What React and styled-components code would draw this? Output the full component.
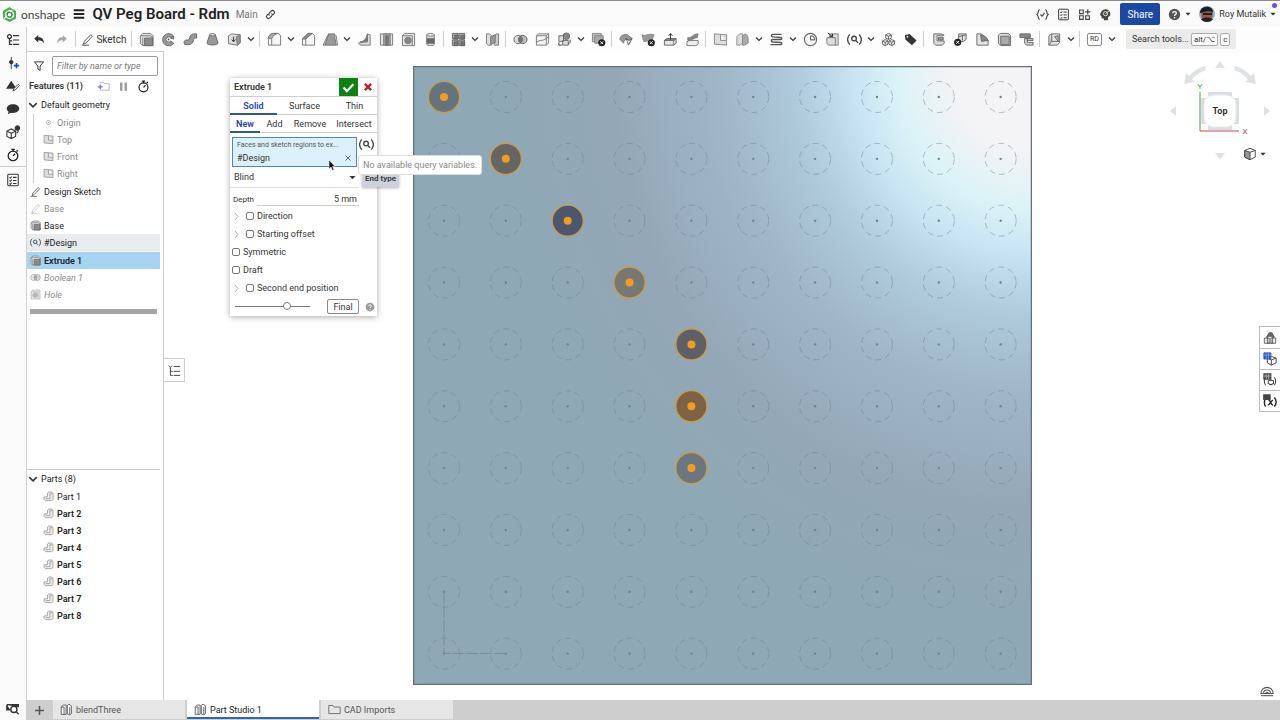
import React, { useState } from "react";
import styled, { createGlobalStyle } from "styled-components";

const GlobalStyle = createGlobalStyle`
  * {
    box-sizing: border-box;
  }

  body {
    margin: 0;
    font-family: Roboto, "Liberation Sans", sans-serif;
    font-size: 9px;
    color: #333;
    background: #fff;
  }

  button, input, select {
    font: inherit;
    color: inherit;
  }
`;

/* ---------- icons ---------- */

const glyphs = {
  tree: (
    <g fill="none" stroke="#333" strokeWidth="1.4">
      <circle cx="4" cy="4" r="2.2" />
      <path d="M4 6v7h3M8 3h7M8 8h7M8 13h7M4 9h3" />
    </g>
  ),
  insert: (
    <g stroke="#333" fill="#333">
      <path d="M6 1v14" />
      <circle cx="6" cy="7" r="2" />
      <path d="M12 8v6M9 11h6" stroke="#1c4aa8" strokeWidth="1.8" />
    </g>
  ),
  appearance: (
    <g>
      <path d="m6 2 6 9H0z" fill="#333" />
      <path d="m14 6 1.500 1.500-5 5-2.500 1 1-2.500z" fill="#fff" stroke="#333" />
    </g>
  ),
  comment: (
    <path
      d="M8 2.500c4.200 0 7.200 2.200 7.200 5s-3 5-7.200 5c-1 0-1.700-.1-2.400-.3L2 14l1-3C1.600 10 .8 8.900.8 7.500c0-2.800 3-5 7.200-5z"
      fill="#333"
    />
  ),
  cubeInfo: (
    <g fill="none" stroke="#333" strokeWidth="1.200">
      <path d="m1 7 5-2.500L11 7v6l-5 2.500L1 13zM1 7l5 2.500L11 7M6 9.500v6" />
      <circle cx="13" cy="3.500" r="2.500" fill="#333" />
      <path d="M12 9c1.500 0 2-1.500 2-3" />
    </g>
  ),
  stopwatch: (
    <g fill="none" stroke="#222" strokeWidth="1.500">
      <circle cx="8" cy="9" r="5.500" />
      <path d="M6 1.500h4M8 2v2M12 4l1.500-1.500M8 9l2.500-2.500" />
    </g>
  ),
  checklist: (
    <g fill="none" stroke="#333" strokeWidth="1.200">
      <rect x="2" y="1.500" width="12" height="13" rx="1" />
      <path d="m4 5 1 1 1.500-2M8 5h4M4 8.500l1 1L6.500 7.500M8 8.500h4M4 12l1 1 1.500-2M8 12h4" />
    </g>
  ),
  undo: (
    <path
      d="M7 2.500v3c4.500 0 7.500 2 7.500 8.500C13 10.500 11 9.500 7 9.500v3L1.500 7.500z"
      fill="#333"
    />
  ),
  redo: (
    <path
      d="M9 2.500v3C4.500 5.500 1.500 7.500 1.500 14 3 10.500 5 9.500 9 9.500v3l5.500-5z"
      fill="#aaa"
    />
  ),
  pencil: (
    <g fill="none" stroke="#555" strokeWidth="1.200">
      <path d="M12 2l2 2-8 8.500L3 14l1-3.500zM1 15h9" />
    </g>
  ),
  pencilLight: (
    <g fill="none" stroke="#999" strokeWidth="1.200">
      <path d="M12 2l2 2-8 8.500L3 14l1-3.500zM1 15h9" />
    </g>
  ),
  extrude: (
    <g stroke="#777">
      <path d="M1.500 4 4 1.500h8.500L15 4v10.500H4L1.500 12z" fill="#e2e2e2" />
      <path d="M1.500 4H12l3 2M4 14.500V6" fill="none" />
      <path d="M6 6.500h8.500v8H6z" fill="#8a8a8a" stroke="#666" />
    </g>
  ),
  revolve: (
    <g>
      <path
        d="M13.500 4.500A6.500 6.500 0 1 0 13.500 12L10.500 9.500a2.800 2.800 0 1 1 0-3z"
        fill="#999"
        stroke="#666"
      />
      <path d="m10.500 6.500 3-2v3z" fill="#ddd" stroke="#555" />
      <circle cx="8" cy="8" r="1" fill="#444" />
    </g>
  ),
  sweep: (
    <path
      d="M1 11c0-2 2-2.500 4-2.500S7 7 7.500 5 9.500 2 12 2h2.500v4.500H13c-1.500 0-1.500 1-2 3s-2.500 4-5.500 4H2z"
      fill="#999"
      stroke="#666"
    />
  ),
  loft: (
    <g stroke="#666">
      <path d="M5 3h6l3 9c-2 2.500-10 2.500-12 0z" fill="#999" />
      <ellipse cx="8" cy="3" rx="3" ry="1.300" fill="#eee" />
    </g>
  ),
  thicken: (
    <g stroke="#777">
      <path d="M1.500 4 5 2l9 1v8.500L11 14l-9.500-1.500z" fill="#ddd" />
      <path d="m10 5 4-2v8.500L11 14z" fill="#999" />
      <path d="M7 5v5M5 8l2 2.500L9 8" stroke="#333" fill="none" />
    </g>
  ),
  fillet: (
    <g stroke="#777">
      <path d="M1.500 14V7c0-3 2-5.500 5.500-5.500h5L14.500 4v10z" fill="#f6f6f6" />
      <path d="M1.500 7c0-3 2-5.500 5.500-5.500h5C9 2 6 4 5 7z" fill="#aaa" />
      <path d="M5 14V7" fill="none" />
    </g>
  ),
  chamfer: (
    <g stroke="#777">
      <path d="M1.500 14V7.500l6-6H12L14.500 4v10z" fill="#f6f6f6" />
      <path d="m1.500 7.500 6-6H12l-7 6z" fill="#888" />
      <path d="M5 14V7.500" fill="none" />
    </g>
  ),
  draft: (
    <g stroke="#777">
      <path d="M6 2h6l2 12H2z" fill="#999" />
      <path d="M6 2 2 14H0z" fill="#ddd" />
      <path d="m12 2 2 12h1.500L14 4z" fill="#eee" />
    </g>
  ),
  rib: (
    <g stroke="#777">
      <path d="M1.500 12 11 10V2l3 1v11H4z" fill="#ddd" />
      <path d="M3 10.500c4 0 7-3 8-8v8z" fill="#777" />
    </g>
  ),
  shell: (
    <g stroke="#777">
      <path d="M1.500 2h13v12h-13z" fill="#e4e4e4" />
      <path d="M5 2v12h7V2z" fill="#aaa" />
      <path d="M7 4v10h3V4z" fill="#777" />
    </g>
  ),
  hole: (
    <g stroke="#777">
      <path d="M1.500 4 4 1.500h10.500v13H1.500z" fill="#e4e4e4" />
      <path d="M1.500 4h10.500v10" fill="none" />
      <circle cx="7.500" cy="9" r="3.500" fill="#888" />
    </g>
  ),
  thread: (
    <g stroke="#777">
      <path d="M4 3v10c0 2 8 2 8 0V3z" fill="#ddd" />
      <path d="M4 7h8v5H4z" fill="#666" />
      <ellipse cx="8" cy="3" rx="4" ry="1.500" fill="#eee" />
    </g>
  ),
  pattern: (
    <g stroke="#666">
      <path d="M1.500 1.500h6v6h-6zM8.500 8.500h6v6h-6z" fill="#aaa" />
      <path d="M8.500 1.500h6v6h-6zM1.500 8.500h6v6h-6z" fill="#aaa" />
      <path d="M3.500 3.500h4v4h-4zM10.500 3.500h4v4h-4zM3.500 10.500h4v4h-4zM10.500 10.500h4v4h-4z" fill="#777" />
    </g>
  ),
  mirror: (
    <g stroke="#777">
      <path d="M1.500 2H5l2 2v10H3.500l-2-2z" fill="#ddd" />
      <path d="m9 5 3-3h2.500v12H10z" fill="#ccc" />
      <path d="m6 5 5-2v8l-5 2z" fill="#999" />
    </g>
  ),
  boolean: (
    <g stroke="#666">
      <circle cx="5.500" cy="8" r="4.500" fill="#ddd" />
      <circle cx="10.500" cy="8" r="4.500" fill="#aaa" fillOpacity=".8" />
      <path d="M8 4.300a4.500 4.500 0 0 1 0 7.400 4.500 4.500 0 0 1 0-7.400z" fill="#777" />
    </g>
  ),
  split: (
    <g stroke="#777" fill="none">
      <path d="M1.500 4 4 2h10.500v10L12 14H1.500z" fill="#f4f4f4" />
      <path d="M1.500 4H12l2.500-2M12 4v10M1.500 11C5 8 8 10 12 7l2.500-2" />
    </g>
  ),
  transform: (
    <g stroke="#666">
      <circle cx="10" cy="4.500" r="3.500" fill="#888" />
      <path d="M2 4h5v6H2zM6 9h6v5H6z" fill="#ddd" />
      <path d="M14 8v3l-2 2M2 11v3h3" fill="none" stroke="#333" />
    </g>
  ),
  deletePart: (
    <g stroke="#888">
      <path d="M1.500 1.500H11v9H1.500z" fill="#bbb" />
      <path d="M4 4h9v8H4z" fill="#aaa" />
      <circle cx="11.500" cy="11.500" r="3.800" fill="#222" stroke="none" />
      <path d="m10 10 3 3m0-3-3 3" stroke="#fff" />
    </g>
  ),
  modifyFillet: (
    <g stroke="#777">
      <path d="M1 8c0-4 4-6 8-5l5 4-4 1c-3-1-5 1-5 4z" fill="#999" />
      <path d="m7 7 4 2 3-2-4 7-1-4z" fill="#eee" stroke="#555" />
    </g>
  ),
  deleteFace: (
    <g stroke="#888">
      <path d="M1 3c4 2 6-2 13 0l-3 7c-4-2-6 1-8 0z" fill="#999" />
      <circle cx="11" cy="11.500" r="3.800" fill="#222" stroke="none" />
      <path d="m9.500 10 3 3m0-3-3 3" stroke="#fff" />
    </g>
  ),
  moveFace: (
    <g stroke="#666">
      <path d="m1.500 9 3-2H14l-2.500 2v5h-10zM14 7v5l-2.500 2" fill="#e4e4e4" />
      <path d="m1.500 9 3-2H14l-2.500 2z" fill="#888" />
      <path d="M8 8V2M6 4l2-2.500L10 4" fill="none" stroke="#333" />
    </g>
  ),
  replaceFace: (
    <g stroke="#777">
      <path d="M2 10.500 4.500 9H14v4l-2.500 1.500H2z" fill="#eee" />
      <path d="M3 6c4 1 5-4 11-4l-1 4C9 6 8 9 3 9z" fill="#888" />
    </g>
  ),
  plane: (
    <g stroke="#888">
      <path d="M1.500 2 14.500 3v11L1.500 13z" fill="#ddd" />
      <path d="M8 2.500V9h6.500" fill="#f4f4f4" />
    </g>
  ),
  frame: (
    <g stroke="#888">
      <path d="M2 5 5 2h3v10l-3 2H2z" fill="#ddd" />
      <path d="m8 4 3-2c2 1 3 3 3 5v5l-4 2H8z" fill="#aaa" />
    </g>
  ),
  helix: (
    <g fill="none" stroke="#555" strokeWidth="1.500">
      <path d="M13.500 2.500H4c-2 0-2 2.500 0 2.700l8.500.6c1.500.2 1.500 2.200 0 2.200H4c-2 0-2 2.500 0 2.700l8.500.5c1.500.2 1.500 2.300 0 2.300h-11" />
    </g>
  ),
  curve: (
    <g fill="none" stroke="#666" strokeWidth="1.300">
      <circle cx="8" cy="8" r="6.500" />
      <path d="M8 4v4.500h4.500M8 4c3 0 4.500 2 4.500 4.500" />
    </g>
  ),
  importPart: (
    <g stroke="#777">
      <path d="M2 6h3V2h9v12H3.500L2 12z" fill="#ddd" />
      <path d="M5 6h6v8" fill="none" />
      <path d="m3 1 5 4M8 2v3H5" stroke="#222" fill="none" />
    </g>
  ),
  query: (
    <g fill="none" stroke="#444" strokeWidth="1.400">
      <path d="M3 2.500c-3 3.500-3 7.500 0 11M13 2.500c3 3.500 3 7.500 0 11" />
      <circle cx="7.500" cy="7" r="2.500" />
      <path d="m9.300 9 2.500 2.500" />
    </g>
  ),
  composite: (
    <g stroke="#666" fill="#e8e8e8">
      <path d="m8 1.500 3 1.500v3.500L8 8 5 6.500V3zM4.500 8l3 1.500V13l-3 1.500-3-1.500V9.500zM11.500 8l3 1.500V13l-3 1.500-3-1.500V9.500z" />
      <path
        d="m5 3 3 1.500L11 3M8 4.500V8M1.500 9.500l3 1.500 3-1.500M4.500 11v3.500M8.500 9.500l3 1.500 3-1.500M11.500 11v3.500"
        fill="none"
      />
    </g>
  ),
  tag: (
    <g>
      <path d="M2 3.500 7 2l7.500 7-5 5L2.500 8z" fill="#333" />
      <circle cx="4.800" cy="5" r="1" fill="#fff" />
    </g>
  ),
  sheetFlange: (
    <g stroke="#666">
      <path d="M3 2h8l3 1.500H6.500v6H14V12l-2 2H5l-2-2z" fill="#ddd" />
      <path d="M8 5.500h5v3H8z" fill="#999" />
    </g>
  ),
  sheetRip: (
    <g stroke="#666">
      <path d="M6 2h8v6l-3 2H6z" fill="#ddd" />
      <path d="m6 5 8-2M10 3v6" fill="none" />
      <circle cx="5" cy="11" r="3.800" fill="#222" stroke="none" />
      <path d="m3.500 9.500 3 3m0-3-3 3" stroke="#fff" />
    </g>
  ),
  sheetCorner: (
    <g stroke="#666">
      <path d="M2 2h5l7 7v5H2z" fill="#e4e4e4" />
      <path d="M6 3c3 0 7 3 8 6l-7 1z" fill="#888" />
    </g>
  ),
  sheetFlat: (
    <g stroke="#666">
      <path d="M1.500 3.500 3.500 1.500h9L14.500 4v10.500H4L1.500 12z" fill="#ddd" />
      <path d="M4 4.500h9v9H4z" fill="#aaa" />
    </g>
  ),
  sheetTable: (
    <g stroke="#666">
      <path d="M1 2h11v4H1z" fill="#888" />
      <path d="M6 7h3v4h6v3H8l-2-2zM9 7h6v2H9z" fill="#ccc" />
    </g>
  ),
  frames: (
    <g stroke="#666">
      <path d="M2 4 5 2h8.500v9L11 14H2z" fill="#e4e4e4" />
      <path d="M5 2v8l-3 4M5 10h8M8 5l4 5V4z" fill="#bbb" />
    </g>
  ),
  part: (
    <path
      d="M1.500 8.500h5V3L8.500 1.500h4L14.500 3v9.500L12.500 14h-9l-2-2zM4 11h6V4h3"
      fill="#ececec"
      stroke="#888"
    />
  ),
  origin: (
    <g fill="none" stroke="#999">
      <circle cx="8" cy="8" r="3" />
      <circle cx="8" cy="8" r="1" fill="#999" stroke="none" />
    </g>
  ),
  funnel: (
    <path d="M2 2.500h12L9.500 8v6L6.500 12V8z" fill="none" stroke="#333" strokeWidth="1.300" />
  ),
  newFolder: (
    <g fill="none" stroke="#aaa">
      <path d="M4 12.500h11V4.500H9.500L8 3H4" />
      <path d="M1 8.500h6M4 5.500v6" stroke="#6b6bc8" strokeWidth="1.400" />
    </g>
  ),
  pause: <path d="M3 2h3.500v12H3zM9.500 2H13v12H9.500z" fill="#999" />,
  studio: (
    <g fill="#fff" stroke="#555" strokeWidth="1.100">
      <path d="m1.500 5 2.500-2.500h3.500V14H1.500zM9 3l2-1.500 3 2V13l-2 1.500-3-1z" />
      <path d="M1.500 5H5v9M12 5v9" fill="none" />
    </g>
  ),
  folder: (
    <path d="M1 13V3h5l1.500 2H15v8z" fill="none" stroke="#666" strokeWidth="1.100" />
  ),
  list: (
    <path
      d="m1 2 2 2 2-2M3 4v10h3M3 9h3M7 3h8M7 9h8M7 14h8"
      fill="none"
      stroke="#444"
      strokeWidth="1.200"
    />
  ),
  search: (
    <g fill="none" stroke="#333" strokeWidth="1.600">
      <path d="M1 3h13v3M1 3v6h4" fill="#333" />
      <circle cx="9" cy="8.500" r="3.500" fill="#fff" />
      <path d="m11.500 11 3 3" />
    </g>
  ),
  braces: (
    <g fill="none" stroke="#444" strokeWidth="1.400">
      <path d="M4.500 2C2 2 3.500 7 1 8c2.500 1 1 6 3.500 6M11.500 2c2.500 0 1 5 3.500 6-2.500 1-1 6-3.500 6M5.500 8l2 2 3-4" />
    </g>
  ),
  addApp: (
    <g fill="none" stroke="#444" strokeWidth="1.400">
      <path d="M2 2.500h4.500V7H2zM2 9.500h4.500V14H2zM9.500 9.500H14V14H9.500zM12 1.500V8M8.800 4.700h6.400" />
    </g>
  ),
  advisor: (
    <g>
      <path
        d="M8 1.500a6 6 0 0 1 6 6c0 2.500-2 3.500-3 4V15H6v-2H3.500l-.5-3L1.500 9A7 7 0 0 1 8 1.500z"
        fill="#444"
      />
      <circle cx="8" cy="7" r="2.600" fill="none" stroke="#fff" />
      <path d="m8 7 4-3" stroke="#fff" />
    </g>
  ),
  help: (
    <g>
      <circle cx="8" cy="8" r="7" fill="#555" />
      <path
        d="M5.800 6.500C5.800 3.600 10.300 3.800 10.300 6.400 10.300 8 8 8 8 9.700"
        fill="none"
        stroke="#fff"
        strokeWidth="1.600"
      />
      <circle cx="8" cy="12" r="1" fill="#fff" />
    </g>
  ),
  link: (
    <g fill="none" stroke="#333" strokeWidth="1.500">
      <path d="M6.500 9.500c-1.500-1.500-1-3 0-4L9 3c3-2.500 6.500 1 4 4l-2 2M9.500 6.500c1.500 1.500 1 3 0 4L7 13c-3 2.500-6.500-1-4-4l2-2" />
    </g>
  ),
  measure: (
    <g stroke="#555" fill="none" strokeWidth="1.200">
      <path d="M1 12a7 7 0 0 1 14 0zM4 12a4 4 0 0 1 8 0M6.500 12a1.500 1.500 0 0 1 3 0" fill="#fff" />
      <path d="M1 14.500h14" />
    </g>
  ),
  appearances: (
    <g stroke="#555">
      <path d="M4 7 7 2h3l3 5z" fill="#666" />
      <path d="M1.500 8H7v6H1.500zM9 8h5.500v6H9zM5 6h6v8H5z" fill="#eee" />
    </g>
  ),
  configTable: (
    <g stroke="#444" fill="none" strokeWidth="1.100">
      <path d="m5 7 4.500-2L15 7v5.500L9.500 15 5 12.500zM5 7l4.500 2L15 7M9.500 9v6" />
      <path d="M1 1h8v7H1z" fill="#2b5dbb" stroke="#2b5dbb" />
      <path d="M1 3.500h8M3.700 1v7M6.300 1v7" stroke="#9bb6e6" strokeWidth=".7" />
    </g>
  ),
  customTable: (
    <g stroke="#444" fill="none" strokeWidth="1.200">
      <path d="M3 5c-2 3-2 6 0 9M13 5c2 3 2 6 0 9M6 9l3-1 3 1v3l-3 1.500L6 12z" />
      <path d="M1 1h8v6H1z" fill="#555" />
      <path d="M1 3.500h8M3.700 1v6M6.300 1v6" stroke="#ccc" strokeWidth=".7" />
    </g>
  ),
  variableTable: (
    <g stroke="#222" fill="none" strokeWidth="1.600">
      <path d="M3 5c-2 3-2 6 0 9.500M13 4c2.500 3 2.500 7 0 10.500M6 7c3-1 2.500 6 5.500 5.500M11.500 7C9 7 8 13 5.500 12.500" />
      <path d="M1 1h7v5H1z" fill="#444" stroke="#444" />
    </g>
  ),
  shaded: (
    <g stroke="#444" strokeWidth="1.100">
      <path d="m2 4 6-2.500L14 4v7.500L8 14.500l-6-3z" fill="#fff" />
      <path d="m2 4 6 2v8.500l-6-3z" fill="#999" />
      <path d="m8 6 6-2" />
    </g>
  ),
  check: <path d="m2 8 4 4.500L14 4" fill="none" stroke="#fff" strokeWidth="2.800" />,
  cross: <path d="m3 3 10 10M13 3 3 13" fill="none" stroke="#b3202c" strokeWidth="3.600" />,
  close: <path d="m3 3 10 10M13 3 3 13" fill="none" stroke="#444" strokeWidth="1.600" />,
  down: <path d="m2 5 6 6 6-6" fill="none" stroke="#333" strokeWidth="2.400" />,
  right: <path d="m5.500 2 5 6-5 6" fill="none" stroke="#999" strokeWidth="1.500" />,
  caret: <path d="M1 4.500h14L8 12z" fill="#333" />,
  menu: <path d="M1 3h14M1 8h14M1 13h14" stroke="#222" strokeWidth="2.400" />,
  plus: <path d="M8 1.500v13M1.500 8h13" stroke="#555" strokeWidth="2.200" />,
  logo: (
    <g fill="none">
      <path d="M8 1.500 13.800 5v6.500L8 14.700 2.200 11.500V5z" stroke="#4caf50" strokeWidth="2.400" />
      <circle cx="8" cy="8.200" r="2.600" stroke="#2e8b3d" strokeWidth="1.500" fill="#fff" />
      <path d="m2 12.500 3.500-3.200M11 3l-2.500 2.500" stroke="#fff" strokeWidth="1.100" />
    </g>
  ),
};

const Svg = styled.svg`
  display: block;
  flex: none;
  opacity: ${(props) => (props.$dim ? 0.6 : 1)};
`;

const Icon = ({ name, size = 16, dim }) => (
  <Svg width={size} height={size} viewBox="0 0 16 16" $dim={dim} aria-hidden="true">
    {glyphs[name]}
  </Svg>
);

/* ---------- page ---------- */

const Page = styled.div`
  display: flex;
  flex-direction: column;
  height: 100vh;
  overflow: hidden;
`;

const Row = styled.div`
  display: flex;
  flex: 1;
  min-height: 0;
`;

const Column = styled.div`
  display: flex;
  flex-direction: column;
  flex: 1;
  min-width: 0;
`;

const PlainButton = styled.button`
  display: flex;
  align-items: center;
  justify-content: center;
  flex: none;
  padding: 0;
  border: 0;
  background: none;
  cursor: pointer;
`;

/* ---------- header ---------- */

const Header = styled.header`
  display: flex;
  align-items: center;
  flex: none;
  height: 27px;
  padding: 0 3px 0 2px;
  border-top: 1px solid #8d8a90;
  background: #fafafa;
`;

const Brand = styled.span`
  margin: 0 8px 0 4px;
  font-family: Lato, sans-serif;
  font-size: 12px;
  color: #444;
`;

const Title = styled.h1`
  margin: 0 6px 0 7px;
  font-size: 15px;
  font-weight: 600;
  color: #222;
`;

const Branch = styled.span`
  margin-right: 7px;
  font-size: 10px;
  color: #777;
`;

const HeaderActions = styled.div`
  display: flex;
  align-items: center;
  gap: 8px;
  margin-left: auto;
`;

const ShareButton = styled(PlainButton)`
  width: 40px;
  height: 22px;
  border-radius: 2px;
  color: #fff;
  font-size: 10px;
  background: #1c48a5;
`;

const HelpButton = styled(PlainButton)`
  gap: 4px;
`;

const UserButton = styled(PlainButton)`
  gap: 4px;
`;

const Dot = styled.span`
  width: 5px;
  height: 5px;
  margin: 0 0 17px -12px;
  border-radius: 50%;
  background: #6b52d9;
`;

/* ---------- left rail ---------- */

const Rail = styled.nav`
  display: flex;
  flex-direction: column;
  align-items: center;
  flex: none;
  width: 27px;
  padding: 1px 0 0;
  border-right: 1px solid #d0d0d0;
  background: #fafafa;
`;

const RailButton = styled(PlainButton)`
  width: 26px;
  height: 23px;
`;

const RailDivider = styled.div`
  width: 26px;
  height: 1px;
  margin-bottom: 1px;
  background: #ccc;
`;

const Spacer = styled.div`
  flex: 1;
`;

/* ---------- toolbar ---------- */

const Toolbar = styled.div`
  display: flex;
  align-items: center;
  flex: none;
  height: 24px;
  background: #fdfdfd;
`;

const Tool = styled(PlainButton)`
  width: 22px;
  height: 22px;
`;

const ArrowTool = styled(PlainButton)`
  width: 23px;
  height: 22px;
`;

const ToolMenu = styled(PlainButton)`
  width: 12px;
  height: 22px;
`;

const ToolDivider = styled.div`
  flex: none;
  width: 1px;
  height: 16px;
  margin: 0 3px 0 2px;
  background: #ccc;
`;

const SketchButton = styled(PlainButton)`
  gap: 2px;
  width: 50px;
  font-size: 10px;
`;

const RdButton = styled(PlainButton)`
  width: 15px;
  height: 13px;
  margin: 0 4px;
  border: 1px solid #888;
  border-radius: 2px;
  font-size: 7px;
`;

const SearchTools = styled(PlainButton)`
  gap: 2px;
  height: 20px;
  margin-left: 8px;
  padding: 0 6px;
  border-radius: 2px;
  background: #ebebeb;
`;

const Key = styled.kbd`
  padding: 1px 2px;
  border: 1px solid #aaa;
  border-radius: 2px;
  font-family: inherit;
  font-size: 8px;
  line-height: 9px;
  background: #fafafa;
`;

/* ---------- feature panel ---------- */

const Panel = styled.aside`
  display: flex;
  flex-direction: column;
  flex: none;
  width: 137px;
  border-top: 1px solid #ccc;
  border-right: 1px solid #ccc;
  background: #fff;
`;

const FilterRow = styled.div`
  display: flex;
  align-items: center;
  gap: 7px;
  padding: 4px 5px 0 6px;
`;

const FilterInput = styled.input`
  flex: 1;
  min-width: 0;
  height: 20px;
  padding: 0 4px;
  border: 1px solid #999;
  border-radius: 2px;
  outline: 0;

  &::placeholder {
    font-style: italic;
    color: #777;
  }
`;

const FeaturesRow = styled.div`
  display: flex;
  align-items: center;
  height: 20px;
  padding: 0 13px 0 2px;
  font-weight: 600;
`;

const FeatureActions = styled.div`
  display: flex;
  gap: 8px;
  margin-left: auto;
`;

const List = styled.ul`
  margin: 0;
  padding: 0 0 1px;
  list-style: none;
`;

const Children = styled(List)`
  margin-left: 6px;
  border-left: 1px solid #ccc;
`;

const Item = styled.li`
  display: flex;
  align-items: center;
  gap: 3px;
  height: 17px;
  margin: ${(props) => (props.$selected ? 1 : 0)}px 3px 0 0;
  padding-left: ${(props) => props.$indent || 3}px;
  font-weight: ${(props) => (props.$bold ? 600 : 400)};
  font-style: ${(props) => (props.$italic ? "italic" : "normal")};
  color: ${(props) => (props.$muted ? "#8a8a8a" : "#222")};
  background: ${(props) => (props.$selected ? "#a6d4f2" : props.$hovered ? "#e8ecee" : "none")};
`;

const GroupItem = styled(Item)`
  height: 18px;
  padding-left: 1px;
`;

const RollbackBar = styled.div`
  height: 5px;
  margin: 5px 6px 0 3px;
  background: #a5a5a5;
`;

const Parts = styled.section`
  flex: 0 0 231px;
  margin-top: auto;
`;

const PartsRule = styled.hr`
  height: 1px;
  margin: 0 3px 0 0;
  border: 0;
  background: #ccc;
`;

/* ---------- canvas ---------- */

const Canvas = styled.main`
  position: relative;
  display: flex;
  align-items: center;
  justify-content: center;
  flex: 1;
  min-width: 0;
  padding: 15px 0;
`;

const Plate = styled.svg`
  display: block;
  height: 100%;
  max-width: 100%;
  aspect-ratio: 1;
`;

const ListToggle = styled(PlainButton)`
  position: absolute;
  left: -1px;
  top: 307px;
  width: 22px;
  height: 24px;
  border: 1px solid #ccc;
  background: #fff;
`;

const ViewCube = styled.svg`
  position: absolute;
  right: 0;
  top: 5px;
  width: 120px;
  height: 110px;
`;

const ViewMenu = styled(PlainButton)`
  position: absolute;
  right: 14px;
  top: 96px;
  gap: 3px;
`;

const TableTabs = styled.div`
  position: absolute;
  right: 0;
  top: 275px;
  display: flex;
  flex-direction: column;
  border: 1px solid #bbb;
  border-right: 0;
`;

const TableTab = styled(PlainButton)`
  width: 20px;
  height: 21px;
  background: #fff;

  & + & {
    border-top: 1px solid #bbb;
  }
`;

const MeasureButton = styled(PlainButton)`
  position: absolute;
  right: 6px;
  bottom: 3px;
`;

/* ---------- extrude dialog ---------- */

const Dialog = styled.form`
  position: absolute;
  left: 66px;
  top: 27px;
  width: 147px;
  background: #fff;
  box-shadow: 0 1px 6px rgba(0, 0, 0, 0.35);
`;

const DialogHeader = styled.div`
  display: flex;
  align-items: center;
  height: 19px;
  padding-left: 4px;
  border-bottom: 1px solid #ccc;
  font-weight: 600;
`;

const DialogTitle = styled.span`
  flex: 1;
`;

const ConfirmButton = styled(PlainButton)`
  width: 19px;
  height: 18px;
  background: #0d8210;
`;

const CancelButton = styled(PlainButton)`
  width: 19px;
  height: 18px;
`;

const Tabs = styled.div`
  display: flex;
  height: 18px;
  border-bottom: 1px solid #ccc;
`;

const Tab = styled(PlainButton)`
  flex: ${(props) => props.$grow} 0 0;
  height: 18px;
  box-shadow: inset 0 -2px ${(props) => (props.$active ? "#2d5a86" : "transparent")};
  color: ${(props) => (props.$active ? "#1c48a5" : "#333")};
  font-weight: ${(props) => (props.$active ? 600 : 400)};
`;

const SelectionRow = styled.div`
  display: flex;
  gap: 2px;
  padding: 4px 2px 0;
`;

const SelectionBox = styled.div`
  display: flex;
  flex-direction: column;
  justify-content: center;
  gap: 2px;
  width: 125px;
  height: 30px;
  padding: 0 4px;
  border: 1px solid #4f86b5;
  background: #dcf0fb;
`;

const SelectionLabel = styled.span`
  font-size: 7px;
  line-height: 10px;
  white-space: nowrap;
  color: #555;
`;

const SelectionItem = styled.span`
  display: flex;
  align-items: center;
  justify-content: space-between;
  line-height: 12px;
`;

const EndType = styled.div`
  display: flex;
  align-items: center;
  width: 129px;
  height: 21px;
  padding: 0 3px 0 4px;
  border-bottom: 1px solid #ddd;
`;

const EndTypeSelect = styled.select`
  flex: 1;
  padding: 0;
  border: 0;
  outline: 0;
  appearance: none;
  background: none;
`;

const DepthRow = styled.label`
  display: flex;
  align-items: flex-end;
  gap: 3px;
  width: 129px;
  height: 18px;
  margin-bottom: 1px;
  padding-left: 3px;
  font-size: 8px;
  line-height: 12px;
`;

const DepthInput = styled.input`
  flex: 1;
  min-width: 0;
  height: 13px;
  padding: 0 2px;
  border: 0;
  border-bottom: 1px solid #ccc;
  outline: 0;
  font-size: 9px;
  text-align: right;
`;

const OptionRow = styled.div`
  display: flex;
  align-items: center;
  gap: 5px;
  height: 18px;
  padding-left: 2px;
`;

const OptionLabel = styled.label`
  display: flex;
  align-items: center;
  gap: 3px;
`;

const Checkbox = styled.input`
  width: 8px;
  height: 8px;
  margin: 0;
  border: 1px solid #777;
  border-radius: 2px;
  appearance: none;
  background: #fff;
`;

const DialogFooter = styled.div`
  display: flex;
  align-items: center;
  height: 19px;
  padding: 0 3px 0 5px;
`;

const Slider = styled.input`
  width: 75px;
  height: 10px;
  margin: 0 17px 0 0;
  appearance: none;
  background: none;

  &::-webkit-slider-runnable-track {
    height: 1px;
    background: #777;
  }

  &::-webkit-slider-thumb {
    width: 8px;
    height: 8px;
    margin-top: -4px;
    border: 1px solid #777;
    border-radius: 50%;
    appearance: none;
    background: #fff;
  }
`;

const FinalButton = styled(PlainButton)`
  width: 32px;
  height: 15px;
  margin-right: 6px;
  border: 1px solid #888;
  border-radius: 2px;
`;

const EndTypeTip = styled.div`
  position: absolute;
  left: 198px;
  top: 120px;
  padding: 2px 3px;
  font-size: 8px;
  line-height: 12px;
  font-weight: 600;
  background: #cdd1df;
  box-shadow: 0 1px 3px rgba(0, 0, 0, 0.3);
`;

const QueryTip = styled.div`
  position: absolute;
  left: 194px;
  top: 104px;
  padding: 0 4px;
  border: 1px solid #ddd;
  border-radius: 3px;
  line-height: 18px;
  color: #888;
  background: #fff;
`;

const Cursor = styled.svg`
  position: absolute;
  left: 164px;
  top: 108px;
  width: 8px;
  height: 12px;
`;

/* ---------- bottom tabs ---------- */

const BottomTabs = styled.nav`
  display: flex;
  gap: 2px;
  flex: none;
  height: 20px;
  background: #cecece;
`;

const AddTab = styled(PlainButton)`
  width: 24px;
`;

const DocTab = styled(PlainButton)`
  justify-content: flex-start;
  gap: 3px;
  width: 132px;
  height: 19px;
  padding-left: 7px;
  color: ${(props) => (props.$active ? "#222" : "#555")};
  background: ${(props) => (props.$active ? "#fff" : "#e6e6e6")};
  box-shadow: inset 0 -2px ${(props) => (props.$active ? "#3564ad" : "#e6e6e6")};
`;

/* ---------- data ---------- */

const railTop = ["tree", "insert", "appearance", "comment", "cubeInfo", "stopwatch"];

// "v" is a drop-down arrow, "|" a divider
const tools =
  "extrude revolve sweep loft thicken v | fillet v chamfer draft v rib shell hole thread | pattern v mirror | boolean split transform v deletePart | modifyFillet deleteFace moveFace replaceFace | plane frame v helix v curve importPart query v composite tag | sheetFlange sheetRip sheetCorner sheetFlat sheetTable | frames v |".split(
    " "
  );

const features = [
  { icon: "pencil", name: "Design Sketch" },
  { icon: "pencilLight", name: "Base", muted: true },
  { icon: "extrude", name: "Base" },
  { icon: "query", name: "#Design", hovered: true },
  { icon: "extrude", name: "Extrude 1", bold: true, selected: true },
  { icon: "boolean", name: "Boolean 1", muted: true, italic: true },
  { icon: "hole", name: "Hole", muted: true, italic: true },
];

const options = [
  { name: "Direction", expandable: true },
  { name: "Starting offset", expandable: true },
  { name: "Symmetric" },
  { name: "Draft" },
  { name: "Second end position", expandable: true },
];

const pegs = {
  "0-0": "#66737d",
  "1-1": "#666564",
  "2-2": "#4c566f",
  "3-3": "#777874",
  "4-4": "#5f6066",
  "4-5": "#7e6245",
  "4-6": "#6a7780",
};

const docTabs = [
  { icon: "studio", name: "blendThree" },
  { icon: "studio", name: "Part Studio 1" },
  { icon: "folder", name: "CAD Imports" },
];

/* ---------- components ---------- */

const TopBar = () => (
  <Header>
    <Icon name="logo" size={15} />
    <Brand>onshape</Brand>
    <PlainButton aria-label="Menu">
      <Icon name="menu" size={12} />
    </PlainButton>
    <Title>QV Peg Board - Rdm</Title>
    <Branch>Main</Branch>
    <PlainButton aria-label="Copy link">
      <Icon name="link" size={11} />
    </PlainButton>
    <HeaderActions>
      {["braces", "checklist", "addApp", "advisor"].map((name) => (
        <PlainButton key={name} aria-label={name}>
          <Icon name={name} size={13} />
        </PlainButton>
      ))}
      <ShareButton>Share</ShareButton>
      <HelpButton aria-label="Help">
        <Icon name="help" size={13} />
        <Icon name="caret" size={6} />
      </HelpButton>
      <UserButton>
        <svg width="16" height="16" viewBox="0 0 16 16" aria-hidden="true">
          <clipPath id="face">
            <circle cx="8" cy="8" r="8" />
          </clipPath>
          <g clipPath="url(#face)">
            <path d="M0 0h16v16H0z" fill="#8fb0cc" />
            <path d="M2 6c1-6 11-6 12 0l-1 7H3z" fill="#8f5a4c" />
            <path d="M1 7C1-1 14-1 14 6l-5-1z" fill="#1a1c26" />
            <path d="M4 7h9v2H4zM1 16c0-6 14-6 14 0z" fill="#24201f" />
          </g>
        </svg>
        Roy Mutalik
        <Icon name="caret" size={6} />
      </UserButton>
      <Dot />
    </HeaderActions>
  </Header>
);

const ToolStrip = () => (
  <Toolbar>
    <ArrowTool aria-label="Undo">
      <Icon name="undo" size={12} />
    </ArrowTool>
    <ArrowTool aria-label="Redo">
      <Icon name="redo" size={12} />
    </ArrowTool>
    <ToolDivider />
    <SketchButton>
      <Icon name="pencil" size={13} />
      Sketch
    </SketchButton>
    <ToolDivider />
    {tools.map((tool, i) => {
      if (tool === "|") return <ToolDivider key={i} />;
      if (tool === "v") {
        return (
          <ToolMenu key={i} aria-label="More">
            <Icon name="down" size={8} />
          </ToolMenu>
        );
      }
      return (
        <Tool key={i} aria-label={tool}>
          <Icon name={tool} size={15} />
        </Tool>
      );
    })}
    <RdButton>RD</RdButton>
    <ToolMenu aria-label="More">
      <Icon name="down" size={8} />
    </ToolMenu>
    <SearchTools>
      Search tools...
      <Key>alt/⌥</Key>
      <Key>c</Key>
    </SearchTools>
  </Toolbar>
);

const FeaturePanel = () => (
  <Panel>
    <FilterRow>
      <Icon name="funnel" size={12} />
      <FilterInput aria-label="Filter" placeholder="Filter by name or type" />
    </FilterRow>
    <FeaturesRow>
      Features (11)
      <FeatureActions>
        <PlainButton aria-label="Add folder">
          <Icon name="newFolder" size={13} />
        </PlainButton>
        <PlainButton aria-label="Pause">
          <Icon name="pause" size={11} />
        </PlainButton>
        <PlainButton aria-label="Regeneration times">
          <Icon name="stopwatch" size={13} />
        </PlainButton>
      </FeatureActions>
    </FeaturesRow>
    <List>
      <GroupItem>
        <Icon name="down" size={10} />
        Default geometry
      </GroupItem>
      <Children as="ul">
        {["Origin", "Top", "Front", "Right"].map((name) => (
          <Item key={name} $indent={9} $muted>
            <Icon name={name === "Origin" ? "origin" : "plane"} size={11} />
            {name}
          </Item>
        ))}
      </Children>
      {features.map(({ icon, name, bold, muted, italic, hovered, selected }, i) => (
        <Item
          key={i}
          $bold={bold}
          $muted={muted}
          $italic={italic}
          $hovered={hovered}
          $selected={selected}
        >
          <Icon name={icon} size={11} dim={muted} />
          {name}
        </Item>
      ))}
    </List>
    <RollbackBar />
    <Parts>
      <PartsRule />
      <List>
        <GroupItem>
          <Icon name="down" size={10} />
          Parts (8)
        </GroupItem>
        {[1, 2, 3, 4, 5, 6, 7, 8].map((n) => (
          <Item key={n} $indent={16} $bold={n > 1}>
            <Icon name="part" size={11} />
            Part {n}
          </Item>
        ))}
      </List>
    </Parts>
  </Panel>
);

const PegBoard = () => {
  const cells = [];
  for (let row = 0; row < 10; row++) {
    for (let col = 0; col < 10; col++) {
      cells.push({ id: `${col}-${row}`, x: 31 + col * 61.85, y: 31 + row * 61.85 });
    }
  }

  return (
    <Plate viewBox="0 0 619 619" role="img" aria-label="Peg board">
      <defs>
        <radialGradient
          id="shine"
          gradientUnits="userSpaceOnUse"
          cx="619"
          cy="0"
          r="619"
          gradientTransform="scale(1 1.05)"
        >
          <stop offset=".13" stopColor="#f4f3f5" />
          <stop offset=".22" stopColor="#dbf3f7" />
          <stop offset=".29" stopColor="#c8e4f3" />
          <stop offset=".38" stopColor="#afcbdc" />
          <stop offset=".5" stopColor="#a0b7c8" />
          <stop offset=".68" stopColor="#94a7b7" />
          <stop offset=".84" stopColor="#8fa8b5" />
        </radialGradient>
      </defs>
      <rect x=".5" y=".5" width="618" height="618" fill="url(#shine)" stroke="#666f78" strokeWidth="1.500" />
      {cells.map(({ id, x, y }) =>
        pegs[id] ? (
          <g key={id}>
            <circle cx={x} cy={y} r="15.5" fill={pegs[id]} stroke="#d29a3c" strokeWidth="1.2" />
            <circle cx={x} cy={y} r="4" fill="#f39c1f" />
          </g>
        ) : (
          <g key={id}>
            <circle
              cx={x}
              cy={y}
              r="15.5"
              fill="none"
              stroke="#6f7d88"
              strokeWidth=".8"
              strokeDasharray="6 4"
              opacity=".6"
            />
            <circle cx={x} cy={y} r="1.2" fill="#77808a" />
          </g>
        )
      )}
      <path d="M31 526v61.500h62" fill="none" stroke="#7c8b95" strokeDasharray="12 2" />
    </Plate>
  );
};

const Orientation = () => (
  <ViewCube viewBox="0 0 120 110" role="img" aria-label="View cube">
    <g fill="#dfe2e5">
      <path d="m60 5 5 7H55zM60 104l5-7H55zM10 55l6-5v10zM110 55l-6-5v10z" />
      <path d="M45 10c-7 2-12 6-16 10l-3-3-2 11 11-2-3-3c4-4 8-7 14-9zM75 10c7 2 12 6 16 10l3-3 2 11-11-2 3-3c-4-4-8-7-14-9z" />
    </g>
    <path d="M48 36h24v6h7v26h-7v6H48v-6h-7V42h7z" fill="#d7dee6" />
    <rect x="44" y="39" width="32" height="32" rx="9" fill="#fff" stroke="#e8e8e8" />
    <path d="M40 36v39" stroke="#3fa546" />
    <path d="M40 75h39" stroke="#c44848" />
    <text x="60" y="58" textAnchor="middle" fontSize="9" fontWeight="600" fill="#222">
      Top
    </text>
    <text x="40" y="33" textAnchor="middle" fontSize="8" fill="#3fa546">
      Y
    </text>
    <text x="85" y="78" textAnchor="middle" fontSize="8" fill="#c43c3c">
      X
    </text>
  </ViewCube>
);

const ExtrudeDialog = () => {
  const [tab, setTab] = useState("Solid");
  const [mode, setMode] = useState("New");

  return (
    <Dialog onSubmit={(e) => e.preventDefault()}>
      <DialogHeader>
        <DialogTitle>Extrude 1</DialogTitle>
        <ConfirmButton aria-label="Accept">
          <Icon name="check" size={13} />
        </ConfirmButton>
        <CancelButton type="button" aria-label="Cancel">
          <Icon name="cross" size={10} />
        </CancelButton>
      </DialogHeader>
      <Tabs>
        {[["Solid", 47], ["Surface", 55], ["Thin", 45]].map(([name, grow]) => (
          <Tab key={name} type="button" $grow={grow} $active={tab === name} onClick={() => setTab(name)}>
            {name}
          </Tab>
        ))}
      </Tabs>
      <Tabs>
        {[["New", 30], ["Add", 29], ["Remove", 42], ["Intersect", 46]].map(([name, grow]) => (
          <Tab key={name} type="button" $grow={grow} $active={mode === name} onClick={() => setMode(name)}>
            {name}
          </Tab>
        ))}
      </Tabs>
      <SelectionRow>
        <SelectionBox>
          <SelectionLabel>Faces and sketch regions to ex...</SelectionLabel>
          <SelectionItem>
            #Design
            <PlainButton type="button" aria-label="Remove #Design">
              <Icon name="close" size={8} />
            </PlainButton>
          </SelectionItem>
        </SelectionBox>
        <div>
          <PlainButton type="button" aria-label="Query variables">
            <Icon name="query" size={15} />
          </PlainButton>
        </div>
      </SelectionRow>
      <EndType>
        <EndTypeSelect aria-label="End type" defaultValue="Blind">
          <option>Blind</option>
          <option>Through all</option>
        </EndTypeSelect>
        <Icon name="caret" size={7} />
      </EndType>
      <DepthRow>
        Depth
        <DepthInput defaultValue="5 mm" />
      </DepthRow>
      {options.map(({ name, expandable }) => (
        <OptionRow key={name}>
          {expandable && <Icon name="right" size={9} />}
          <OptionLabel>
            <Checkbox type="checkbox" />
            {name}
          </OptionLabel>
        </OptionRow>
      ))}
      <DialogFooter>
        <Slider type="range" aria-label="Preview" defaultValue="72" />
        <FinalButton type="button">Final</FinalButton>
        <PlainButton type="button" aria-label="Help">
          <Icon name="help" size={10} dim />
        </PlainButton>
      </DialogFooter>
    </Dialog>
  );
};

const App = () => {
  const [activeTab, setActiveTab] = useState("Part Studio 1");

  return (
    <Page>
      <GlobalStyle />
      <TopBar />
      <Row>
        <Rail>
          {railTop.map((name) => (
            <RailButton key={name} aria-label={name}>
              <Icon name={name} size={14} />
            </RailButton>
          ))}
          <RailDivider />
          <RailButton aria-label="Properties">
            <Icon name="checklist" size={14} />
          </RailButton>
          <Spacer />
          <RailButton aria-label="Search tabs">
            <Icon name="search" size={14} />
          </RailButton>
        </Rail>
        <Column>
          <ToolStrip />
          <Row>
            <FeaturePanel />
            <Canvas>
              <PegBoard />
              <ListToggle aria-label="Toggle feature list">
                <Icon name="list" size={13} />
              </ListToggle>
              <Orientation />
              <ViewMenu aria-label="View options">
                <Icon name="shaded" size={14} />
                <Icon name="caret" size={6} />
              </ViewMenu>
              <TableTabs>
                {["appearances", "configTable", "customTable", "variableTable"].map((name) => (
                  <TableTab key={name} aria-label={name}>
                    <Icon name={name} size={14} />
                  </TableTab>
                ))}
              </TableTabs>
              <MeasureButton aria-label="Measure">
                <Icon name="measure" size={14} />
              </MeasureButton>
              <ExtrudeDialog />
              <EndTypeTip>End type</EndTypeTip>
              <QueryTip>No available query variables.</QueryTip>
              <Cursor viewBox="0 0 8 12">
                <path
                  d="M1 1v9l2-2 1.500 3.500 1.500-.7L4.500 7.500H7z"
                  fill="#111"
                  stroke="#fff"
                  strokeWidth=".5"
                />
              </Cursor>
            </Canvas>
          </Row>
          <BottomTabs>
            <AddTab aria-label="New tab">
              <Icon name="plus" size={11} />
            </AddTab>
            {docTabs.map(({ icon, name }) => (
              <DocTab key={name} $active={activeTab === name} onClick={() => setActiveTab(name)}>
                <Icon name={icon} size={13} />
                {name}
              </DocTab>
            ))}
          </BottomTabs>
        </Column>
      </Row>
    </Page>
  );
};

export default App;
